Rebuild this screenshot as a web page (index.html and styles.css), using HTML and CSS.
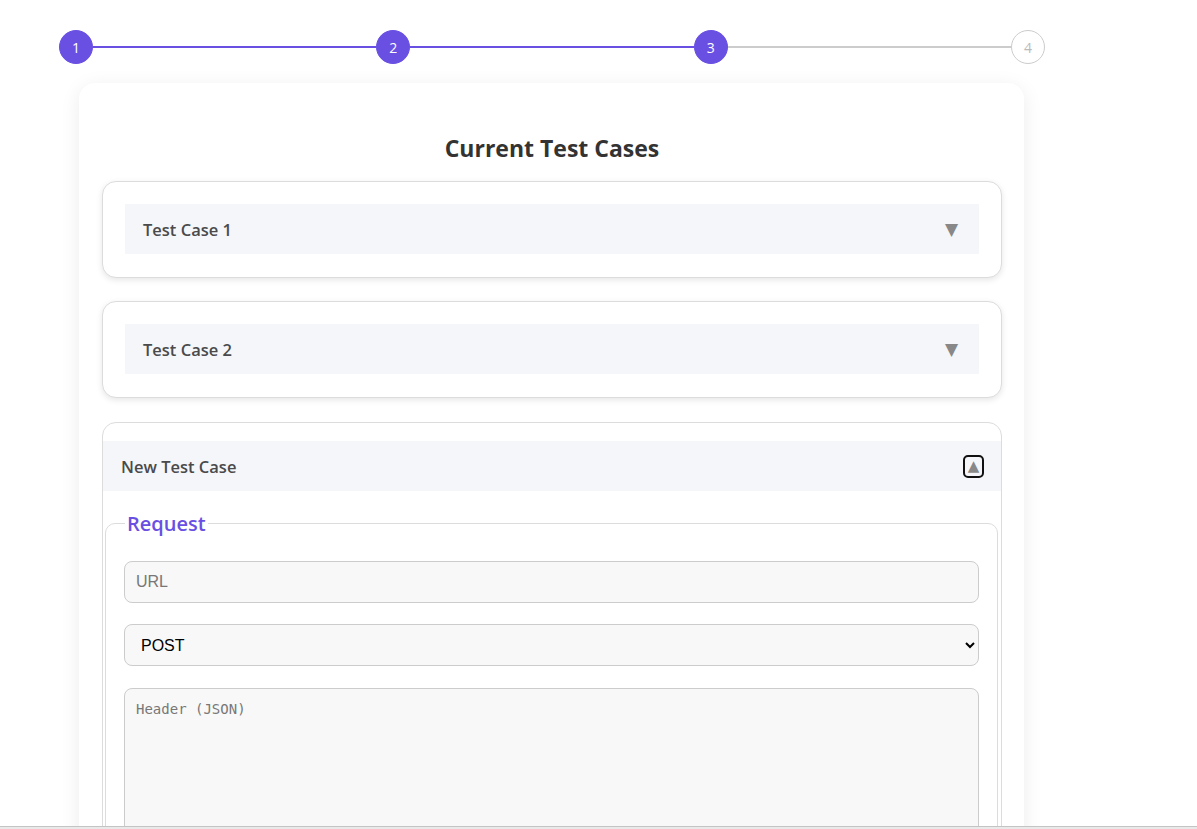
FILE: index.html
```html
<!DOCTYPE html>
<html lang="en">
<head>
<meta charset="utf-8">
<title>Test Cases</title>
<link rel="stylesheet" href="styles.css">
</head>
<body>
<div class="wrap">
  <div class="stepper">
    <div class="step done">1</div>
    <div class="line done"></div>
    <div class="step done">2</div>
    <div class="line done"></div>
    <div class="step done">3</div>
    <div class="line"></div>
    <div class="step">4</div>
  </div>

  <div class="card">
    <h2 class="title">Current Test Cases</h2>
    <div class="cases">
      <div class="case">
        <div class="case-head">
          <span class="case-name">Test Case 1</span>
          <span class="arrow">▼</span>
        </div>
      </div>
      <div class="case">
        <div class="case-head">
          <span class="case-name">Test Case 2</span>
          <span class="arrow">▼</span>
        </div>
      </div>
      <div class="case case-open">
        <div class="case-head">
          <span class="case-name">New Test Case</span>
          <button class="toggle" type="button">▲</button>
        </div>
        <fieldset class="group">
          <legend>Request</legend>
          <input class="field" type="text" placeholder="URL">
          <select class="field">
            <option>POST</option>
            <option>GET</option>
            <option>PUT</option>
            <option>DELETE</option>
          </select>
          <textarea class="field area" placeholder="Header (JSON)"></textarea>
        </fieldset>
      </div>
    </div>
  </div>
</div>
<div class="hbar"></div>
</body>
</html>
```

FILE: styles.css
```css
* { box-sizing: border-box; }
html, body { margin: 0; padding: 0; background: #fff; }
body { font-family: "Open Sans", "Noto Sans", sans-serif; color: #333; }

.wrap {
  width: 986px;
  margin-left: 59px;
  padding-top: 30px;
}

.stepper {
  display: flex;
  align-items: center;
}
.step {
  width: 34px;
  height: 34px;
  border-radius: 50%;
  border: 1px solid #ccc;
  background: #fff;
  color: #bbb;
  font-size: 14px;
  display: flex;
  align-items: center;
  justify-content: center;
  flex: none;
}
.step.done {
  background: #6a4fe3;
  border-color: #6a4fe3;
  color: #fff;
}
.line {
  flex: 1;
  height: 2px;
  background: #ccc;
}
.line.done { background: #6a4fe3; }

.card {
  margin: 19px 21px 0 20px;
  background: #fff;
  border-radius: 16px;
  box-shadow: 0 4px 20px rgba(0,0,0,0.08);
  padding: 48px 22px 40px 23px;
  min-height: 900px;
}
.title {
  margin: 0 0 16px;
  text-align: center;
  font-size: 23px;
  line-height: 34px;
  font-weight: 700;
  color: #333;
}

.cases {
  display: flex;
  flex-direction: column;
  gap: 23px;
}
.case {
  border: 1px solid #dcdcdc;
  border-radius: 14px;
  padding: 22px 22px 23px;
  box-shadow: 0 2px 6px rgba(0,0,0,0.1);
  background: #fff;
}
.case-head {
  height: 50px;
  background: #f5f6fa;
  display: flex;
  align-items: center;
  justify-content: space-between;
  padding: 0 21px 0 18px;
}
.case-name {
  font-size: 16.5px;
  font-weight: 600;
  color: #4a4a4a;
}
.arrow {
  font-size: 17px;
  color: #888;
  font-family: "DejaVu Sans", sans-serif;
  line-height: 1;
}

.case-open {
  margin-top: 1px;
  padding: 18px 0 0;
  box-shadow: none;
  border-bottom-left-radius: 0;
  border-bottom-right-radius: 0;
}
.case-open .case-head { padding-right: 17px; }
.toggle {
  width: 21px;
  height: 23px;
  border: 2px solid #111;
  border-radius: 5px;
  background: transparent;
  color: #888;
  font-size: 15px;
  line-height: 1;
  padding: 0;
  display: flex;
  align-items: center;
  justify-content: center;
  font-family: "DejaVu Sans", sans-serif;
}

.group {
  margin: 19px 3px 0 2px;
  border: 1px solid #dcdcdc;
  border-radius: 10px;
  padding: 24px 18px 20px;
  display: flex;
  flex-direction: column;
  gap: 21px;
}
.group legend {
  font-size: 20px;
  font-weight: 600;
  color: #6a4fe3;
  padding: 0 2px;
  margin-left: 1px;
}
.field {
  width: 100%;
  height: 42px;
  border: 1px solid #cccccc;
  border-radius: 8px;
  background: #f8f8f8;
  font-family: "Liberation Sans", Arial, sans-serif;
  font-size: 16px;
  color: #000;
  padding: 0 11px;
}
.field::placeholder { color: #777; }
select.field { padding: 0 12px; }
.area {
  height: 240px;
  margin-top: 1px;
  padding: 12px 11px;
  font-family: "DejaVu Sans Mono", monospace;
  font-size: 14px;
  resize: vertical;
}

.hbar {
  position: fixed;
  left: 0;
  right: 0;
  bottom: 0;
  height: 3px;
  background: #e9e9e9;
  border-top: 1px solid #c4c4c4;
}
```
